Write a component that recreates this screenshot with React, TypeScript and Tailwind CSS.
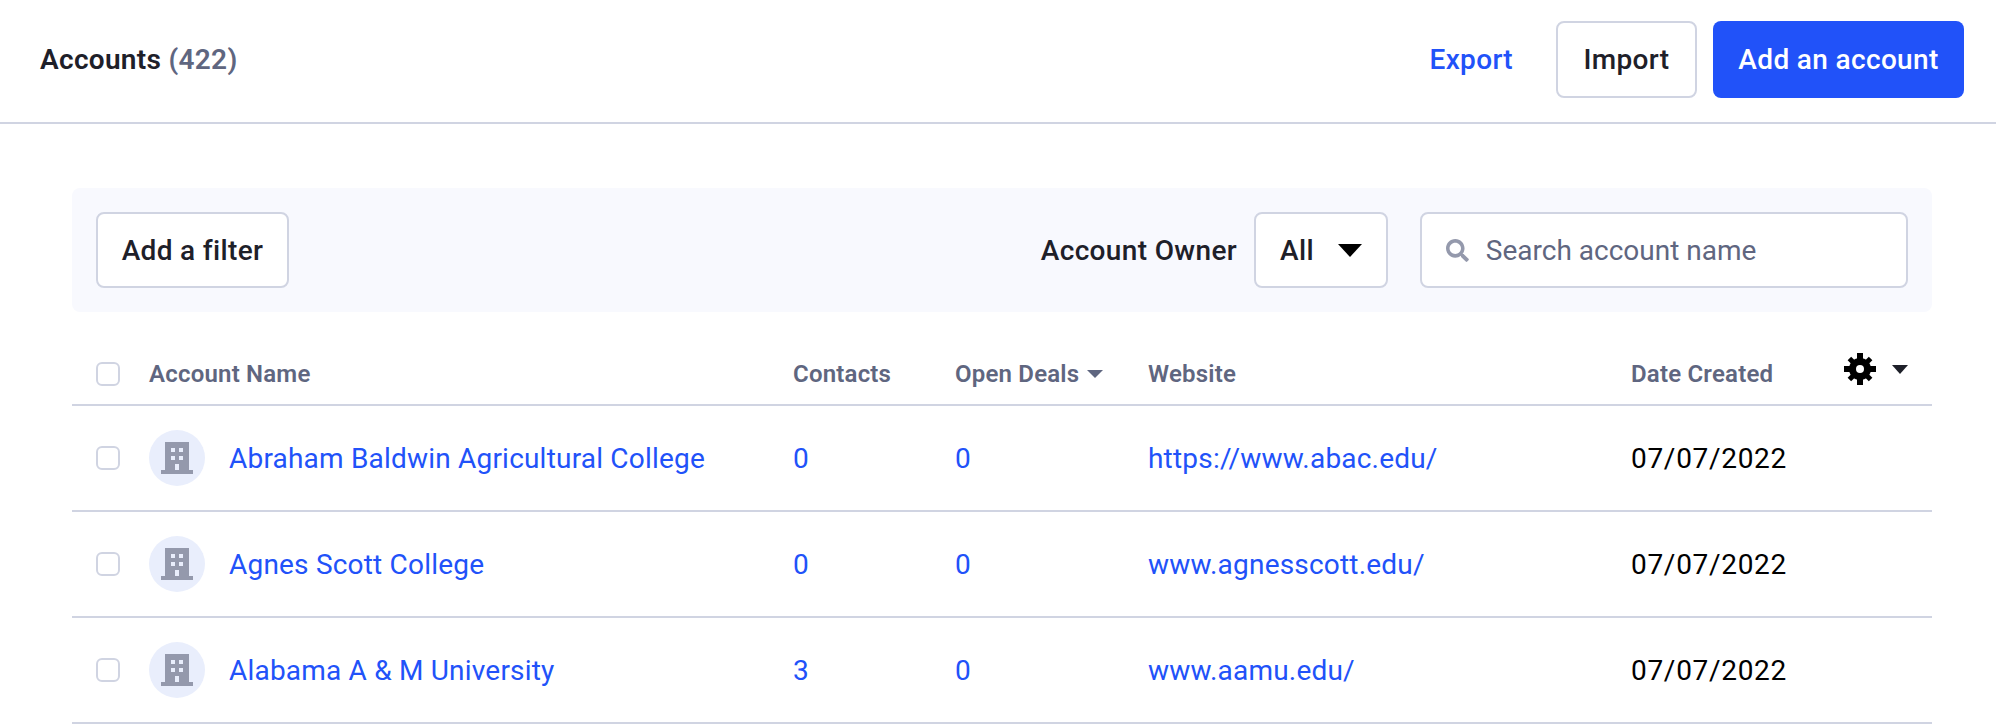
import React from "react";
import { FaSearch } from "react-icons/fa";

const columns = "grid grid-cols-[53px_644px_162px_193px_483px_1fr] items-center pl-6";

const accounts = [
    { name: "Abraham Baldwin Agricultural College", contacts: 0, deals: 0, website: "https://www.abac.edu/", date: "07/07/2022" },
    { name: "Agnes Scott College", contacts: 0, deals: 0, website: "www.agnesscott.edu/", date: "07/07/2022" },
    { name: "Alabama A & M University", contacts: 3, deals: 0, website: "www.aamu.edu/", date: "07/07/2022" },
];

const Checkbox = () => <span className="block size-6 rounded-md border-2 border-[#d0d4e2] bg-white" />;

const BuildingIcon = () => (
    <svg width="32" height="32" viewBox="0 0 32 32" fill="#9499ac">
        <path
            fillRule="evenodd"
            d="M4 0h24v28H4zM10 6v4h4V6zM18 6v4h4V6zM10 14v4h4v-4zM18 14v4h4v-4zM14 22v6h4v-6zM0 28h14v4H0zM18 28h14v4H18zM14 28h4v4h-4z"
        />
    </svg>
);

const GearIcon = () => (
    <svg width="32" height="32" viewBox="0 0 32 32" fill="#000">
        <rect x="13" y="0" width="6" height="32" />
        <rect x="0" y="13" width="32" height="6" />
        <rect x="13.5" y="1" width="5" height="30" transform="rotate(45 16 16)" />
        <rect x="13.5" y="1" width="5" height="30" transform="rotate(-45 16 16)" />
        <circle cx="16" cy="16" r="11" />
        <circle cx="16" cy="16" r="4" fill="#fff" />
    </svg>
);

export default function App() {
    return (
        <div className="min-h-[726px] bg-white font-['Roboto','Liberation_Sans',sans-serif] text-[28px] leading-9 tracking-[0.2px] text-[#1e2029]">
            <header className="flex h-[124px] items-center border-b-2 border-[#d0d4e2] pl-10 pr-8 pb-[3px]">
                <h1 className="font-semibold tracking-[0.3px]">
                    Accounts <span className="text-[#5f6680]">(422)</span>
                </h1>
                <div className="ml-auto flex items-center tracking-[0.35px]">
                    <a className="mr-[43px] font-medium text-[#2152f9]">Export</a>
                    <button className="h-[77px] w-[141px] rounded-lg border-2 border-[#d0d4e2] bg-white font-medium">Import</button>
                    <button className="ml-4 h-[77px] w-[251px] rounded-lg bg-[#2152f9] font-medium text-white">Add an account</button>
                </div>
            </header>

            <main className="pt-16 pr-[64px] pl-[72px]">
                <div className="flex h-[124px] items-center rounded-lg bg-[#f8f9fe] px-6 tracking-[0.35px]">
                    <button className="h-[76px] w-[193px] rounded-lg border-2 border-[#d0d4e2] bg-white pt-0.5 font-medium">Add a filter</button>
                    <label className="ml-auto pt-0.5 font-medium">Account Owner</label>
                    <div className="ml-[17px] flex h-[76px] w-[134px] items-center justify-between rounded-lg border-2 border-[#d0d4e2] bg-white pr-6 pl-6 font-medium">
                        <span className="pt-0.5">All</span>
                        <span className="h-0 w-0 border-x-12 border-t-[13px] border-x-transparent border-t-black" />
                    </div>
                    <div className="ml-8 flex h-[76px] w-[488px] items-center rounded-lg border-2 border-[#d0d4e2] bg-white pl-6">
                        <FaSearch className="size-[25px] text-[#9499ac]" />
                        <input
                            className="ml-[17px] w-full bg-transparent pt-0.5 tracking-normal outline-none placeholder:text-[#5f6680]"
                            placeholder="Search account name"
                        />
                    </div>
                </div>

                <div className={`${columns} mt-[46px] h-[48px] border-b-2 border-[#d0d4e2] pb-[14px] text-2xl leading-6 font-semibold text-[#5f6680]`}>
                    <Checkbox />
                    <div>Account Name</div>
                    <div>Contacts</div>
                    <div className="flex items-center gap-2">
                        Open Deals
                        <span className="h-0 w-0 border-x-8 border-t-8 border-x-transparent border-t-[#5f6680]" />
                    </div>
                    <div>Website</div>
                    <div className="flex items-center justify-between pr-6">
                        <span>Date Created</span>
                        <span className="flex -translate-y-[5px] items-center gap-4">
                            <GearIcon />
                            <span className="h-0 w-0 border-x-8 border-t-[9px] border-x-transparent border-t-[#1e2029]" />
                        </span>
                    </div>
                </div>

                {accounts.map((account) => (
                    <div key={account.name} className={`${columns} h-[106px] border-b-2 border-[#d0d4e2]`}>
                        <Checkbox />
                        <div className="flex items-center gap-6">
                            <span className="flex size-14 items-center justify-center rounded-full bg-[#e9eefc]">
                                <BuildingIcon />
                            </span>
                            <a className="pt-0.5 text-[#2152f9]">{account.name}</a>
                        </div>
                        <a className="pt-0.5 text-[#2152f9]">{account.contacts}</a>
                        <a className="pt-0.5 text-[#2152f9]">{account.deals}</a>
                        <a className="pt-0.5 text-[#2152f9]">{account.website}</a>
                        <div className="pt-0.5 tracking-[0.7px] text-black">{account.date}</div>
                    </div>
                ))}
            </main>
        </div>
    );
}
